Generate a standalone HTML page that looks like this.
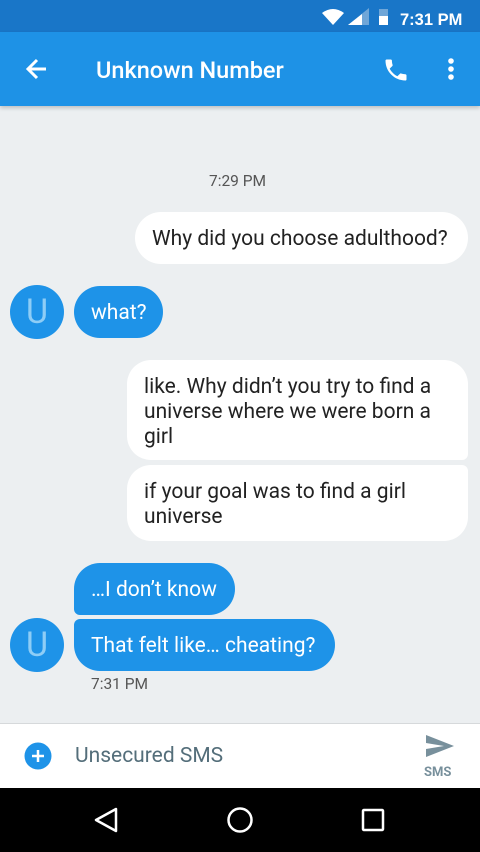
<!DOCTYPE html>
<html><head><meta charset="utf-8"><style>
*{margin:0;padding:0;box-sizing:border-box}
body{width:480px;height:852px;position:relative;overflow:hidden;background:#eceff1;font-family:"Roboto","Liberation Sans",sans-serif}
.abs{position:absolute}
.status{left:0;top:0;width:480px;height:32px;background:#1976c8}
.bar{left:0;top:32px;width:480px;height:74px;background:#1e92e6;box-shadow:0 2px 4px rgba(0,0,0,.2)}
.title{left:96px;top:56px;color:#fff;font-size:23.5px;font-weight:500;white-space:nowrap}
.b{position:absolute;font-size:21px;line-height:25px;padding:15px 17px 11px;white-space:nowrap}
.out{background:#fff;color:#222}
.in{background:#1e93e8;color:#fff}
.av{position:absolute;width:54px;height:54px;border-radius:50%;background:#1e93e8;color:#8ecdf6;font-size:34px;text-align:center;line-height:54px}
.ts{font-size:15.5px;color:#555}
</style></head><body>
<div class="abs status"></div>
<svg class="abs" style="left:320px;top:5px" width="160" height="24">
<path d="M2 8 Q13 0 24 8 L13 20Z" fill="#fff"/>
<path d="M28 20 L49 3 L49 20Z" fill="#6fa6d8"/><path d="M28 20 L42 9 L42 20Z" fill="#fff"/>
<rect x="59" y="4" width="9" height="16" fill="#6fa6d8"/><rect x="59" y="11" width="9" height="9" fill="#fff"/>
<text x="80" y="20" fill="#fff" font-size="16.5" font-weight="bold" font-family="Liberation Sans">7:31 PM</text>
</svg>
<div class="abs bar"></div>
<svg class="abs" style="left:24px;top:56px" width="26" height="26"><path d="M22 13H5M13 4L4 13L13 22" stroke="#fff" stroke-width="3" fill="none"/></svg>
<div class="abs title">Unknown Number</div>
<svg class="abs" style="left:382px;top:56px" width="28" height="28" viewBox="0 0 24 24"><path fill="#fff" d="M6.6 10.8c1.4 2.8 3.8 5.1 6.6 6.6l2.2-2.2c.3-.3.7-.4 1-.2 1.100.4 2.3.6 3.6.6.6 0 1 .4 1 1V20c0 .6-.4 1-1 1C10.6 21 3 13.4 3 4c0-.6.4-1 1-1h3.5c.6 0 1 .4 1 1 0 1.3.2 2.5.6 3.6.1.3 0 .7-.2 1L6.6 10.8z"/></svg>
<svg class="abs" style="left:444px;top:58px" width="14" height="24"><circle cx="7" cy="3" r="2.8" fill="#fff"/><circle cx="7" cy="11" r="2.8" fill="#fff"/><circle cx="7" cy="19" r="2.8" fill="#fff"/></svg>

<div class="abs ts" style="left:209px;top:172px">7:29 PM</div>
<div class="b out" style="left:135px;top:212px;width:333px;height:52px;border-radius:26px">Why did you choose adulthood?</div>
<div class="av" style="left:10px;top:285px">U</div>
<div class="b in" style="left:74px;top:286px;width:89px;height:52px;border-radius:26px">what?</div>
<div class="b out" style="left:127px;top:360px;width:341px;height:100px;border-radius:24px 24px 6px 24px">like. Why didn’t you try to find a<br>universe where we were born a<br>girl</div>
<div class="b out" style="left:127px;top:465px;width:341px;height:76px;border-radius:24px 6px 24px 24px">if your goal was to find a girl<br>universe</div>
<div class="b in" style="left:74px;top:563px;width:161px;height:52px;border-radius:26px 26px 26px 6px">…I don’t know</div>
<div class="av" style="left:10px;top:618px">U</div>
<div class="b in" style="left:74px;top:619px;width:261px;height:52px;border-radius:6px 26px 26px 26px">That felt like… cheating?</div>
<div class="abs ts" style="left:91px;top:675px">7:31 PM</div>

<div class="abs" style="left:0;top:723px;width:480px;height:65px;background:#fff;border-top:1px solid #d6d9db"></div>
<svg class="abs" style="left:24px;top:742px" width="28" height="28"><circle cx="14" cy="14" r="13.5" fill="#1e93e8"/><path d="M14 8v12M8 14h12" stroke="#fff" stroke-width="2.5"/></svg>
<div class="abs" style="left:75px;top:744px;font-size:21px;color:#546e7a">Unsecured SMS</div>
<svg class="abs" style="left:424px;top:733px" width="32" height="28"><path d="M2 2L30 13L2 24L2 16L20 13L2 10Z" fill="#78909c"/></svg>
<div class="abs" style="left:424px;top:765px;font-size:13px;font-weight:bold;color:#78909c">SMS</div>

<div class="abs" style="left:0;top:788px;width:480px;height:64px;background:#000"></div>
<svg class="abs" style="left:0;top:788px" width="480" height="64">
<path d="M116 21L96 32L116 43Z" stroke="#fff" stroke-width="2.5" fill="none" stroke-linejoin="round"/>
<circle cx="240" cy="32" r="11.5" stroke="#fff" stroke-width="2.5" fill="none"/>
<rect x="363" y="22" width="20" height="20" stroke="#fff" stroke-width="2.5" fill="none" rx="1"/>
</svg>
</body></html>
